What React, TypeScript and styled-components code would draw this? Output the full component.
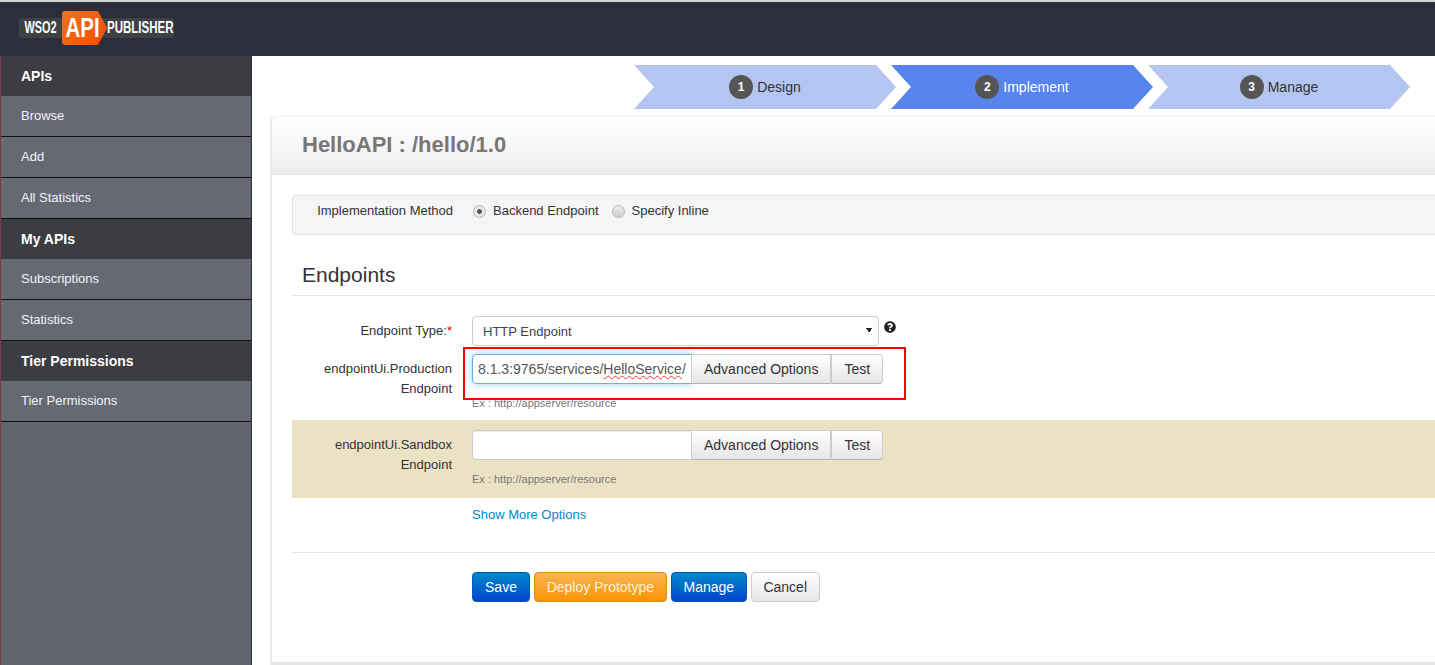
import React from 'react';
import styled, {createGlobalStyle} from 'styled-components';
import {FaQuestionCircle} from 'react-icons/fa';

const GlobalStyle = createGlobalStyle`
  html, body {
    margin: 0;
    height: 100%;
    overflow: hidden;
    background: #fff;
    font-family: "Liberation Sans", Arial, sans-serif;
    font-size: 13px;
    color: #333;
  }
  * { box-sizing: border-box; }
`;

const Page = styled.div`
  height: 665px;
  display: flex;
  flex-direction: column;
  overflow: hidden;
`;

const TopBar = styled.header`
  height: 56px;
  flex: none;
  display: flex;
  align-items: center;
  padding-left: 19px;
  background: #2a2f3b;
  border-top: 2px solid #d8d8d8;
`;

const Logo = styled.div`
  width: 155px;
  height: 20px;
  margin-top: -2px;
  display: flex;
  align-items: center;
  background: #3f4144;
  border-radius: 4px;
  color: #fff;
  font-weight: bold;
  font-size: 16px;
`;

const LogoSlot = styled.span<{$width: number}>`
  width: ${p => p.$width}px;
  flex: none;
  display: flex;
  justify-content: center;
`;

/* no condensed face is installed, so the wordmark is squeezed */
const LogoWord = styled.span<{$squeeze: number}>`
  display: inline-block;
  white-space: nowrap;
  transform: scaleX(${p => p.$squeeze});
`;

const LogoBadge = styled.span`
  width: 45px;
  height: 34px;
  flex: none;
  display: flex;
  align-items: center;
  justify-content: center;
  padding-right: 5px;
  font-size: 27px;
  background: linear-gradient(135deg, #e8761c, #fb4a00);
  border-radius: 3px;
  clip-path: polygon(0 0, 80% 0, 100% 50%, 80% 100%, 0 100%);
`;

const Columns = styled.div`
  flex: 1;
  display: flex;
  min-height: 0;
`;

const Sidebar = styled.nav`
  width: 252px;
  flex: none;
  background: #5f646d;
  border-left: 1px solid #7a3a48;
  border-right: 1px solid #2f3238;
`;

const SideHeading = styled.div`
  height: 40px;
  display: flex;
  align-items: center;
  padding-left: 20px;
  background: #3c3d42;
  color: #fff;
  font-size: 14px;
  font-weight: bold;
`;

const SideItem = styled.a`
  height: 41px;
  display: flex;
  align-items: center;
  padding: 0 0 2px 20px;
  background: #646972;
  border-bottom: 1px solid #111;
  color: #f2f4f6;
  font-size: 13px;
`;

const Main = styled.main`
  flex: 1;
  min-width: 0;
  padding: 9px 0 0 19px;
`;

const Wizard = styled.div`
  height: 44px;
  display: flex;
  margin-left: 363px;
`;

const Step = styled.div<{$active?: boolean}>`
  width: 262px;
  flex: none;
  margin-right: -5px;
  display: flex;
  align-items: center;
  justify-content: center;
  gap: 4px;
  font-size: 14px;
  background: ${p => (p.$active ? '#5884ef' : '#b3c5f0')};
  color: ${p => (p.$active ? '#fff' : '#333')};
  clip-path: polygon(0 0, calc(100% - 20px) 0, 100% 50%, calc(100% - 20px) 100%, 0 100%, 20px 50%);
`;

const StepNumber = styled.span`
  width: 24px;
  height: 24px;
  border-radius: 50%;
  display: flex;
  align-items: center;
  justify-content: center;
  background: #555;
  color: #fff;
  font-size: 12px;
  font-weight: bold;
`;

const Card = styled.section`
  height: 549px;
  margin-top: 7px;
  background: #fff;
  border-left: 1px solid #e6e6e6;
  border-bottom: 3px solid #e5e5e5;
  border-radius: 5px 0 0 0;
  box-shadow: -1px 0 2px #eee;
`;

const CardHead = styled.div`
  height: 59px;
  display: flex;
  align-items: center;
  padding: 0 0 2px 30px;
  background: linear-gradient(#fff, #ededed);
  border-top: 1px solid #f2f2f2;
  border-bottom: 1px solid #e4e4e4;
  border-radius: 5px 0 0 0;
`;

const Title = styled.h2`
  margin: 0;
  font-size: 22px;
  font-weight: bold;
  color: #777;
`;

const CardBody = styled.div`
  padding: 20px 0 0 20px;
`;

const MethodBar = styled.div`
  height: 40px;
  display: grid;
  grid-template-columns: 160px 1fr;
  column-gap: 20px;
  padding-top: 5px;
  background: #f5f5f5;
  border: 1px solid #e3e3e3;
  border-right: 0;
  border-radius: 4px 0 0 4px;
  line-height: 20px;
`;

const MethodLabel = styled.div`
  text-align: right;
`;

const RadioGroup = styled.div`
  display: flex;
  align-items: center;
  height: 20px;
`;

const Radio = styled.span<{$checked?: boolean}>`
  width: 13px;
  height: 13px;
  margin-right: 7px;
  border-radius: 50%;
  border: 1px solid #b5b5b5;
  background: ${p => (p.$checked ? 'radial-gradient(circle, #555 0 2px, #e8e8e8 2.8px)' : 'linear-gradient(#eee, #ccc)')};
`;

const RadioText = styled.span`
  margin-right: 13px;
`;

const SectionTitle = styled.h3`
  height: 61px;
  margin: 0;
  padding: 28px 0 0 10px;
  font-size: 21px;
  font-weight: normal;
  line-height: 24px;
  color: #333;
  border-bottom: 1px solid #e5e5e5;
`;

const FormRow = styled.div<{$shaded?: boolean; $first?: boolean}>`
  position: relative;
  display: grid;
  grid-template-columns: 160px 1fr;
  column-gap: 20px;
  margin-top: ${p => (p.$first ? '20px' : '0')};
  margin-bottom: ${p => (p.$first ? '8px' : '0')};
  padding: ${p => (p.$shaded ? '10px 0 11px' : '0 0 9px')};
  padding-bottom: ${p => (p.$first ? '0' : undefined)};
  background: ${p => (p.$shaded ? '#ebe2c3' : 'transparent')};
`;

const FieldLabel = styled.label`
  padding-top: 5px;
  text-align: right;
  line-height: 20px;
  color: #333;
`;

const Required = styled.span`
  color: #e00;
`;

const SelectLine = styled.div`
  display: flex;
  align-items: flex-start;
  gap: 5px;
`;

const TypeSelect = styled.select`
  appearance: none;
  width: 407px;
  height: 30px;
  padding: 0 10px;
  font: 13px "Liberation Sans", sans-serif;
  color: #444;
  background-color: #fff;
  background-image: linear-gradient(to top right, transparent 50%, #222 50%), linear-gradient(to top left, transparent 50%, #222 50%);
  background-size: 3px 5px, 3px 5px;
  background-position: 393px 11px, 396px 11px;
  background-repeat: no-repeat;
  border: 1px solid #ccc;
  border-radius: 4px;
`;

const HelpIcon = styled(FaQuestionCircle)`
  margin-top: 5px;
  font-size: 12px;
  color: #222;
`;

const InputGroup = styled.div`
  display: flex;
  height: 30px;
`;

const UrlInput = styled.div<{$focus?: boolean}>`
  width: 220px;
  height: 30px;
  padding: 0 5px;
  overflow: hidden;
  white-space: nowrap;
  font-size: 14px;
  line-height: 28px;
  color: #555;
  background: #fff;
  border: 1px solid ${p => (p.$focus ? '#66afe9' : '#ccc')};
  border-radius: 4px 0 0 4px;
  box-shadow: ${p => (p.$focus ? '0 0 8px rgba(102,175,233,.6)' : 'inset 0 1px 1px rgba(0,0,0,.075)')};
`;

const Misspelt = styled.span`
  text-decoration: underline wavy #e33 1px;
`;

const GroupButton = styled.button<{$last?: boolean}>`
  height: 30px;
  margin-left: ${p => (p.$last ? '0' : '-1px')};
  padding: 0 12px;
  font: 14px "Liberation Sans", sans-serif;
  color: #333;
  background: linear-gradient(#fff, #e6e6e6);
  border: 1px solid #ccc;
  border-radius: ${p => (p.$last ? '0 4px 4px 0' : '0')};
  border-bottom-color: #b3b3b3;
`;

const Hint = styled.div`
  margin-top: 11px;
  font-size: 11px;
  line-height: 16px;
  color: #777;
`;

const Annotation = styled.div`
  position: absolute;
  left: 171px;
  top: -7px;
  width: 443px;
  height: 53px;
  border: 2px solid #f00;
  pointer-events: none;
`;

const MoreLink = styled.a`
  display: block;
  margin: 7px 0 0 180px;
  line-height: 20px;
  color: #0088cc;
`;

const Divider = styled.hr`
  height: 1px;
  margin: 27px 0 19px;
  border: 0;
  background: #e5e5e5;
`;

const Actions = styled.div`
  display: flex;
  gap: 4px;
  margin-left: 180px;
`;

const tones = {
  blue: 'background: linear-gradient(#0088cc, #0044cc); border-color: #0055bb; color: #fff;',
  orange: 'background: linear-gradient(#fbb450, #f89406); border-color: #e08a10; color: #fdf0dc;',
  plain: 'background: linear-gradient(#fff, #e6e6e6); border-color: #ccc; color: #333;',
};

const ActionButton = styled.button<{$tone: keyof typeof tones}>`
  height: 30px;
  min-width: 58px;
  padding: 0 11.7px;
  font: 14px "Liberation Sans", sans-serif;
  border: 1px solid;
  border-radius: 4px;
  ${p => tones[p.$tone]}
`;

export default function App(): React.ReactElement {
  return (
    <Page>
      <GlobalStyle />
      <TopBar>
        <Logo>
          <LogoSlot $width={43}><LogoWord $squeeze={0.68}>WSO2</LogoWord></LogoSlot>
          <LogoBadge><LogoWord $squeeze={0.76}>API</LogoWord></LogoBadge>
          <LogoSlot $width={67}><LogoWord $squeeze={0.72}>PUBLISHER</LogoWord></LogoSlot>
        </Logo>
      </TopBar>
      <Columns>
        <Sidebar>
          <SideHeading>APIs</SideHeading>
          <SideItem>Browse</SideItem>
          <SideItem>Add</SideItem>
          <SideItem>All Statistics</SideItem>
          <SideHeading>My APIs</SideHeading>
          <SideItem>Subscriptions</SideItem>
          <SideItem>Statistics</SideItem>
          <SideHeading>Tier Permissions</SideHeading>
          <SideItem>Tier Permissions</SideItem>
        </Sidebar>
        <Main>
          <Wizard>
            <Step><StepNumber>1</StepNumber>Design</Step>
            <Step $active><StepNumber>2</StepNumber>Implement</Step>
            <Step><StepNumber>3</StepNumber>Manage</Step>
          </Wizard>
          <Card>
            <CardHead>
              <Title>HelloAPI : /hello/1.0</Title>
            </CardHead>
            <CardBody>
              <MethodBar>
                <MethodLabel>Implementation Method</MethodLabel>
                <RadioGroup>
                  <Radio $checked />
                  <RadioText>Backend Endpoint</RadioText>
                  <Radio />
                  <RadioText>Specify Inline</RadioText>
                </RadioGroup>
              </MethodBar>
              <SectionTitle>Endpoints</SectionTitle>
              <FormRow $first>
                <FieldLabel>Endpoint Type:<Required>*</Required></FieldLabel>
                <SelectLine>
                  <TypeSelect defaultValue="http">
                    <option value="http">HTTP Endpoint</option>
                  </TypeSelect>
                  <HelpIcon />
                </SelectLine>
              </FormRow>
              <FormRow>
                <FieldLabel>endpointUi.Production Endpoint</FieldLabel>
                <div>
                  <InputGroup>
                    <UrlInput $focus>8.1.3:9765/services/<Misspelt>HelloService</Misspelt>/</UrlInput>
                    <GroupButton>Advanced Options</GroupButton>
                    <GroupButton $last>Test</GroupButton>
                  </InputGroup>
                  <Hint>Ex : http://appserver/resource</Hint>
                </div>
                <Annotation />
              </FormRow>
              <FormRow $shaded>
                <FieldLabel>endpointUi.Sandbox Endpoint</FieldLabel>
                <div>
                  <InputGroup>
                    <UrlInput />
                    <GroupButton>Advanced Options</GroupButton>
                    <GroupButton $last>Test</GroupButton>
                  </InputGroup>
                  <Hint>Ex : http://appserver/resource</Hint>
                </div>
              </FormRow>
              <MoreLink>Show More Options</MoreLink>
              <Divider />
              <Actions>
                <ActionButton $tone="blue">Save</ActionButton>
                <ActionButton $tone="orange">Deploy Prototype</ActionButton>
                <ActionButton $tone="blue">Manage</ActionButton>
                <ActionButton $tone="plain">Cancel</ActionButton>
              </Actions>
            </CardBody>
          </Card>
        </Main>
      </Columns>
    </Page>
  );
}
